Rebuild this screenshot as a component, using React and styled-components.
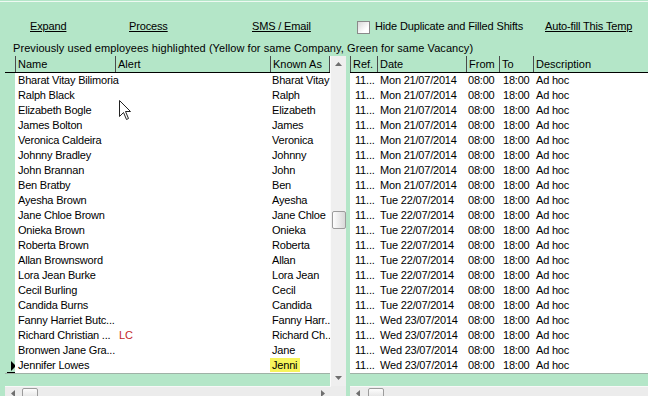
import React from 'react';
import styled, { createGlobalStyle } from 'styled-components';

const GREEN = '#b4e6c8';

const Global = createGlobalStyle`
  html, body { margin: 0; padding: 0; background: ${GREEN}; }
  body { font-family: "Liberation Sans", Arial, sans-serif; font-size: 11px; }
`;

const Screen = styled.div`
  position: relative;
  width: 648px;
  height: 396px;
  overflow: hidden;
  background: ${GREEN};
  padding-top: 1px;
  box-sizing: border-box;
  display: flex;
  flex-direction: column;
  font-family: "Liberation Sans", Arial, sans-serif;
  font-size: 11px;
  color: #000;
`;

const Toolbar = styled.div`
  border-top: 1px solid #eef9f2;
  height: 39px;
  box-sizing: border-box;
  display: flex;
  align-items: flex-start;
  padding: 17px 0 0 30px;
  flex: none;
  letter-spacing: -0.15px;
`;

const ToolItem = styled.div`
  width: ${p => p.$w}px;
  flex: none;
  display: flex;
  align-items: center;
  height: 14px;
  line-height: 14px;
  white-space: nowrap;
`;

const Link = styled.span`
  text-decoration: underline;
  text-underline-offset: 1px;
`;

const Check = styled.span`
  width: 11px;
  height: 11px;
  margin-top: 2px;
  border: 1px solid #8a8a8a;
  background: linear-gradient(135deg, #d8d8d8, #ffffff 70%);
  display: inline-block;
`;

const Note = styled.div`
  height: 16px;
  line-height: 16px;
  padding-left: 13px;
  white-space: nowrap;
  flex: none;
  letter-spacing: 0.07px;
`;

const Grids = styled.div`
  flex: 1;
  display: flex;
  padding-left: 5px;
  gap: 4px;
  min-height: 0;
`;

const LeftPanel = styled.div`
  width: 341px;
  flex: none;
  display: flex;
  flex-direction: column;
`;

const RightPanel = styled.div`
  flex: 1;
  min-width: 0;
  display: flex;
  flex-direction: column;
  overflow: hidden;
`;

const PanelMain = styled.div`
  height: 330px;
  display: flex;
  flex: none;
`;

const Table = styled.div`
  width: ${p => (p.$w ? `${p.$w}px` : 'auto')};
  flex: ${p => (p.$w ? 'none' : '1')};
  display: flex;
  flex-direction: column;
  overflow: hidden;
`;

const HeaderRow = styled.div`
  display: flex;
  height: 17px;
  box-sizing: border-box;
  border-bottom: 1px solid #000;
  flex: none;
`;

const HeadCell = styled.div`
  width: ${p => p.$w}px;
  flex: none;
  box-sizing: border-box;
  line-height: 16px;
  padding-left: 2px;
  white-space: nowrap;
  overflow: hidden;
  border-left: ${p => (p.$ind ? 'none' : '1px solid #4a4a4a')};
  border-right: ${p => (p.$last ? '1px solid #4a4a4a' : 'none')};
`;

const Body = styled.div`
  height: 300px;
  flex: none;
  display: flex;
  flex-direction: column;
`;

const Row = styled.div`
  display: flex;
  height: 15px;
  line-height: 15px;
`;

const Cell = styled.div`
  width: ${p => p.$w}px;
  flex: none;
  box-sizing: border-box;
  padding-left: ${p => p.$pad ?? 3}px;
  white-space: nowrap;
  overflow: ${p => (p.$spill ? 'visible' : 'hidden')};
  z-index: ${p => (p.$spill ? 1 : 'auto')};
  letter-spacing: -0.2px;
  background: ${p => (p.$ind ? GREEN : '#fff')};
  color: ${p => (p.$red ? '#c42a2a' : '#000')};
  position: relative;
`;

const Highlight = styled.span`
  background: #f6f45c;
  padding: 0 3px 0 2px;
  margin-left: -2px;
  display: inline-block;
  line-height: 14px;
`;

const Pointer = styled.svg`
  position: absolute;
  left: 2px;
  top: 2px;
`;

const Band = styled.div`
  height: 13px;
  flex: none;
  box-sizing: border-box;
  border-top: 1px solid #9fb2a7;
  background: ${GREEN};
`;

const VScroll = styled.div`
  width: 16px;
  flex: none;
  display: flex;
  flex-direction: column;
  background: #efefef;
  border-left: 1px solid #fbfbfb;
  box-sizing: border-box;
`;

const SBtn = styled.div`
  width: ${p => (p.$h ? 16 : 15)}px;
  height: ${p => (p.$h ? 12 : 16)}px;
  flex: none;
  display: flex;
  align-items: center;
  justify-content: center;
`;

const Track = styled.div`
  flex: 1;
  display: flex;
  flex-direction: column;
`;

const VThumb = styled.div`
  margin-top: ${p => p.$offset}px;
  margin-left: 1px;
  width: 12px;
  height: 16px;
  border: 1px solid #9c9c9c;
  border-radius: 2px;
  background: linear-gradient(to right, #fdfdfd, #d9d9d9);
`;

const HScroll = styled.div`
  height: 17px;
  flex: none;
  display: flex;
  background: #ececec;
  border-top: 1px solid #f8f8f8;
  box-sizing: border-box;
  width: ${p => (p.$w ? `${p.$w}px` : 'auto')};
`;

const HThumb = styled.div`
  margin-left: ${p => p.$offset}px;
  margin-top: 1px;
  width: 14px;
  height: 12px;
  border: 1px solid #9c9c9c;
  border-radius: 2px;
  background: linear-gradient(to bottom, #fdfdfd, #d9d9d9);
`;

const HSpacer = styled.div`
  flex: 1;
`;

const HRow = styled.div`
  display: flex;
  flex: none;
`;

const Corner = styled.div`
  width: 15px;
  height: 17px;
  background: #ececec;
`;

const Cursor = styled.svg`
  position: absolute;
  left: 119px;
  top: 100px;
`;

const Arrow = ({ dir }) => {
  const pts = {
    up: '0,4 3.5,0 7,4',
    down: '0,0 7,0 3.5,4',
    left: '4,0 4,7 0,3.5',
    right: '0,0 0,7 4,3.5',
  }[dir];
  const vert = dir === 'up' || dir === 'down';
  return (
    <svg width={vert ? 7 : 4} height={vert ? 4 : 7} viewBox={vert ? '0 0 7 4' : '0 0 4 7'}>
      <polygon points={pts} fill="#6f6f6f" />
    </svg>
  );
};

const people = [
  ['Bharat Vitay Bilimoria', '', 'Bharat Vitay'],
  ['Ralph Black', '', 'Ralph'],
  ['Elizabeth Bogle', '', 'Elizabeth'],
  ['James Bolton', '', 'James'],
  ['Veronica Caldeira', '', 'Veronica'],
  ['Johnny Bradley', '', 'Johnny'],
  ['John Brannan', '', 'John'],
  ['Ben Bratby', '', 'Ben'],
  ['Ayesha Brown', '', 'Ayesha'],
  ['Jane Chloe Brown', '', 'Jane Chloe'],
  ['Onieka Brown', '', 'Onieka'],
  ['Roberta Brown', '', 'Roberta'],
  ['Allan Brownsword', '', 'Allan'],
  ['Lora Jean Burke', '', 'Lora Jean'],
  ['Cecil Burling', '', 'Cecil'],
  ['Candida Burns', '', 'Candida'],
  ['Fanny Harriet Butc...', '', 'Fanny Harr..'],
  ['Richard Christian ...', 'LC', 'Richard Ch..'],
  ['Bronwen Jane Gra...', '', 'Jane'],
  ['Jennifer Lowes', '', 'Jenni'],
];

const dateFor = i =>
  i < 8 ? 'Mon 21/07/2014' : i < 16 ? 'Tue 22/07/2014' : 'Wed 23/07/2014';

const L = { ind: 10, name: 100, alert: 155, known: 60 };
const R = { ref: 27, date: 89, from: 33, to: 34, desc: 170 };

export default function App() {
  return (
    <Screen>
      <Global />
      <Toolbar>
        <ToolItem $w={99}><Link>Expand</Link></ToolItem>
        <ToolItem $w={123}><Link>Process</Link></ToolItem>
        <ToolItem $w={105}><Link>SMS / Email</Link></ToolItem>
        <ToolItem $w={18}><Check /></ToolItem>
        <ToolItem $w={170}>Hide Duplicate and Filled Shifts</ToolItem>
        <ToolItem $w={100}><Link>Auto-fill This Temp</Link></ToolItem>
      </Toolbar>
      <Note>Previously used employees highlighted (Yellow for same Company, Green for same Vacancy)</Note>
      <Grids>
        <LeftPanel>
          <PanelMain>
            <Table $w={325}>
              <HeaderRow>
                <HeadCell $w={L.ind} $ind />
                <HeadCell $w={L.name}>Name</HeadCell>
                <HeadCell $w={L.alert}>Alert</HeadCell>
                <HeadCell $w={L.known} $last>Known As</HeadCell>
              </HeaderRow>
              <Body>
                {people.map(([name, alert, known], i) => {
                  const current = i === people.length - 1;
                  return (
                    <Row key={i}>
                      <Cell $w={L.ind} $ind $pad={0}>
                        {current && (
                          <Pointer width="9" height="13" viewBox="0 0 9 13">
                            <polygon points="4,1 9,6 4,11" fill="#000" />
                            <line x1="0" y1="12.5" x2="9" y2="12.5" stroke="#000" strokeWidth="1" />
                          </Pointer>
                        )}
                      </Cell>
                      <Cell $w={L.name} $spill={!alert}>{name}</Cell>
                      <Cell $w={L.alert} $red $pad={4}>{alert}</Cell>
                      <Cell $w={L.known} $pad={2}>
                        {current ? <Highlight>{known}</Highlight> : known}
                      </Cell>
                    </Row>
                  );
                })}
              </Body>
              <Band />
            </Table>
            <VScroll>
              <SBtn><Arrow dir="up" /></SBtn>
              <Track>
                <VThumb $offset={139} />
              </Track>
              <SBtn><Arrow dir="down" /></SBtn>
            </VScroll>
          </PanelMain>
          <HRow>
            <HScroll $w={326}>
              <SBtn $h><Arrow dir="left" /></SBtn>
              <HThumb $offset={1} />
              <HSpacer />
              <SBtn $h><Arrow dir="right" /></SBtn>
            </HScroll>
            <Corner />
          </HRow>
        </LeftPanel>
        <RightPanel>
          <PanelMain>
            <Table>
              <HeaderRow>
                <HeadCell $w={R.ref}>Ref.</HeadCell>
                <HeadCell $w={R.date}>Date</HeadCell>
                <HeadCell $w={R.from}>From</HeadCell>
                <HeadCell $w={R.to}>To</HeadCell>
                <HeadCell $w={R.desc}>Description</HeadCell>
              </HeaderRow>
              <Body>
                {people.map((_, i) => (
                  <Row key={i}>
                    <Cell $w={R.ref} $pad={5}>11...</Cell>
                    <Cell $w={R.date}>{dateFor(i)}</Cell>
                    <Cell $w={R.from} $pad={2}>08:00</Cell>
                    <Cell $w={R.to} $pad={4}>18:00</Cell>
                    <Cell $w={R.desc}>Ad hoc</Cell>
                  </Row>
                ))}
              </Body>
              <Band />
            </Table>
          </PanelMain>
          <HScroll>
            <SBtn $h><Arrow dir="left" /></SBtn>
            <HThumb $offset={2} />
            <HSpacer />
          </HScroll>
        </RightPanel>
      </Grids>
      <Cursor width="13" height="21" viewBox="0 0 13 21">
        <path d="M0.5 0.5 L0.5 16.5 L4.5 12.5 L7.5 19.5 L9.5 18.5 L6.5 11.5 L11.5 11.5 Z" fill="#fff" stroke="#222" strokeWidth="1" strokeLinejoin="miter" />
      </Cursor>
    </Screen>
  );
}
